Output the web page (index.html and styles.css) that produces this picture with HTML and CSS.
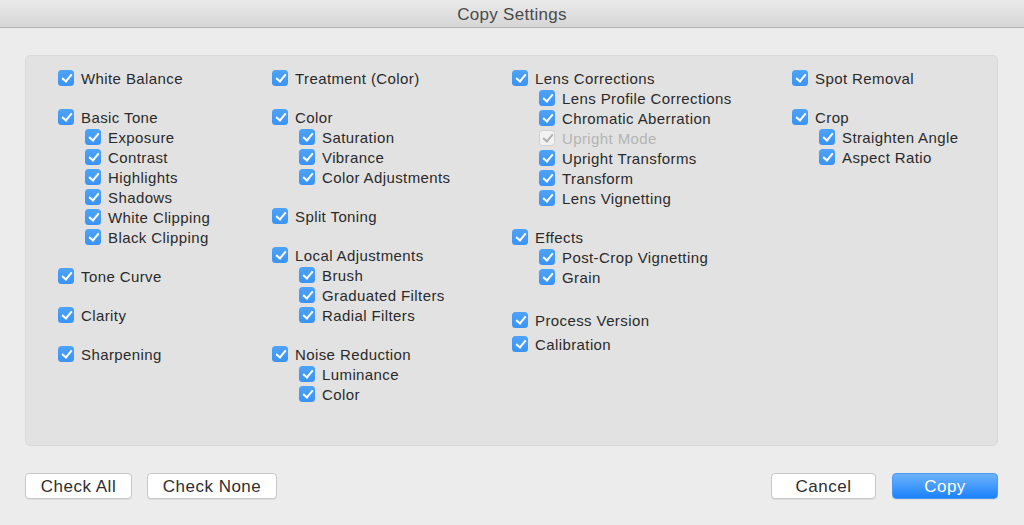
FILE: index.html
```html
<!DOCTYPE html>
<html>
<head>
<meta charset="utf-8">
<link rel="stylesheet" href="styles.css">
</head>
<body>
<div class="window">
  <div class="titlebar">Copy Settings</div>
  <div class="content">
    <div class="panel">
      <div class="col col1">
        <div class="group"><div class="item"><span class="cb"></span>White Balance</div></div>
        <div class="group">
          <div class="item"><span class="cb"></span>Basic Tone</div>
          <div class="item sub"><span class="cb"></span>Exposure</div>
          <div class="item sub"><span class="cb"></span>Contrast</div>
          <div class="item sub"><span class="cb"></span>Highlights</div>
          <div class="item sub"><span class="cb"></span>Shadows</div>
          <div class="item sub"><span class="cb"></span>White Clipping</div>
          <div class="item sub"><span class="cb"></span>Black Clipping</div>
        </div>
        <div class="group"><div class="item"><span class="cb"></span>Tone Curve</div></div>
        <div class="group"><div class="item"><span class="cb"></span>Clarity</div></div>
        <div class="group"><div class="item"><span class="cb"></span>Sharpening</div></div>
      </div>
      <div class="col col2">
        <div class="group"><div class="item"><span class="cb"></span>Treatment (Color)</div></div>
        <div class="group">
          <div class="item"><span class="cb"></span>Color</div>
          <div class="item sub"><span class="cb"></span>Saturation</div>
          <div class="item sub"><span class="cb"></span>Vibrance</div>
          <div class="item sub"><span class="cb"></span>Color Adjustments</div>
        </div>
        <div class="group"><div class="item"><span class="cb"></span>Split Toning</div></div>
        <div class="group">
          <div class="item"><span class="cb"></span>Local Adjustments</div>
          <div class="item sub"><span class="cb"></span>Brush</div>
          <div class="item sub"><span class="cb"></span>Graduated Filters</div>
          <div class="item sub"><span class="cb"></span>Radial Filters</div>
        </div>
        <div class="group">
          <div class="item"><span class="cb"></span>Noise Reduction</div>
          <div class="item sub"><span class="cb"></span>Luminance</div>
          <div class="item sub"><span class="cb"></span>Color</div>
        </div>
      </div>
      <div class="col col3">
        <div class="group">
          <div class="item"><span class="cb"></span>Lens Corrections</div>
          <div class="item sub"><span class="cb"></span>Lens Profile Corrections</div>
          <div class="item sub"><span class="cb"></span>Chromatic Aberration</div>
          <div class="item sub disabled"><span class="cb"></span>Upright Mode</div>
          <div class="item sub"><span class="cb"></span>Upright Transforms</div>
          <div class="item sub"><span class="cb"></span>Transform</div>
          <div class="item sub"><span class="cb"></span>Lens Vignetting</div>
        </div>
        <div class="group">
          <div class="item"><span class="cb"></span>Effects</div>
          <div class="item sub"><span class="cb"></span>Post-Crop Vignetting</div>
          <div class="item sub"><span class="cb"></span>Grain</div>
        </div>
        <div class="group wide">
          <div class="item spaced"><span class="cb"></span>Process Version</div>
          <div class="item"><span class="cb"></span>Calibration</div>
        </div>
      </div>
      <div class="col col4">
        <div class="group"><div class="item"><span class="cb"></span>Spot Removal</div></div>
        <div class="group">
          <div class="item"><span class="cb"></span>Crop</div>
          <div class="item sub"><span class="cb"></span>Straighten Angle</div>
          <div class="item sub"><span class="cb"></span>Aspect Ratio</div>
        </div>
      </div>
    </div>
    <div class="buttons">
      <div class="btn btn-all">Check All</div>
      <div class="btn btn-none">Check None</div>
      <div class="spacer"></div>
      <div class="btn btn-cancel">Cancel</div>
      <div class="btn btn-copy">Copy</div>
    </div>
  </div>
</div>
</body>
</html>
```
FILE: styles.css
```css
* { box-sizing: border-box; }
html, body { margin: 0; padding: 0; }
body {
  width: 1024px;
  height: 525px;
  background: #ececec;
  font-family: "Helvetica Neue", "Liberation Sans", Arial, sans-serif;
  color: #2a2a2a;
  overflow: hidden;
}
.window { width: 1024px; height: 525px; display: flex; flex-direction: column; }
.titlebar {
  height: 28px;
  flex: none;
  background: linear-gradient(#eaeaea, #d6d6d6);
  border-bottom: 1px solid #b3b3b3;
  text-align: center;
  font-size: 17px;
  letter-spacing: 0.3px;
  line-height: 29px;
  color: #4a4a4a;
}
.content { padding: 27px 26px 0 25px; flex: 1; display: flex; flex-direction: column; }
.panel {
  height: 391px;
  background: #e2e2e2;
  border: 1px solid #d9d9d9;
  border-radius: 5px;
  display: flex;
  padding: 12px 0 0 32px;
}
.col1 { width: 214px; }
.col2 { width: 240px; }
.col3 { width: 280px; }
.col4 { width: 200px; }
.group { margin-bottom: 19px; }
.item {
  display: flex;
  align-items: center;
  height: 20px;
  font-size: 15px;
  letter-spacing: 0.4px;
  white-space: nowrap;
}
.item.sub { padding-left: 27px; }
.group.wide { padding-top: 4px; }
.item.spaced { margin-bottom: 4px; }
.cb {
  width: 16px;
  height: 16px;
  border-radius: 3.5px;
  background: linear-gradient(#4ea3f7, #3a93f4);
  margin-right: 7px;
  flex: none;
  position: relative;
}
.cb::after {
  content: "";
  position: absolute;
  left: 5.5px;
  top: 2px;
  width: 4px;
  height: 8px;
  border-right: 2px solid #fff;
  border-bottom: 2px solid #fff;
  transform: rotate(40deg);
}
.disabled { color: #b4b4b4; }
.disabled .cb {
  background: #f2f2f2;
  border: 1px solid #cfcfcf;
}
.disabled .cb::after {
  left: 4.5px;
  top: 1px;
  border-color: #b0b0b0;
}
.buttons {
  display: flex;
  margin-top: 27px;
}
.spacer { flex: 1; }
.btn {
  height: 26px;
  border-radius: 4px;
  background: #fff;
  border: 1px solid #c8c8c8;
  box-shadow: 0 1px 0 rgba(0,0,0,0.06);
  font-size: 17px;
  letter-spacing: 0.5px;
  line-height: 26px;
  text-align: center;
  color: #2e2e2e;
}
.btn-all { width: 107px; margin-right: 15px; }
.btn-none { width: 130px; }
.btn-cancel { width: 105px; margin-right: 16px; }
.btn-copy {
  width: 106px;
  background: linear-gradient(#6db3fb, #1b82fb);
  border-color: #4a9af5;
  color: #fff;
}
```
